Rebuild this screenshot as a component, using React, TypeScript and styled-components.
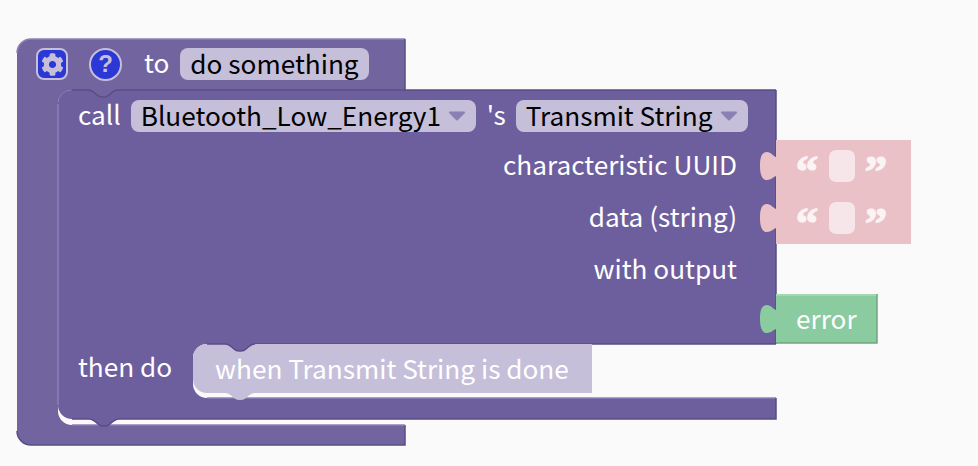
import React from "react";
import styled, {createGlobalStyle} from "styled-components";
import {FaCog} from "react-icons/fa";

const GlobalStyle = createGlobalStyle`
  html, body {
    margin: 0;
    background: #fafafa;
  }
  body {
    font-family: "Noto Sans CJK SC", "Noto Sans", sans-serif;
  }
`;

const Canvas = styled.div`
  position: relative;
  width: 978px;
  height: 466px;
  overflow: hidden;
  background: #fafafa;
`;

const Shapes = styled.svg`
  position: absolute;
  left: 0;
  top: 0;
`;

const Row = styled.div<{ $x: number; $y: number }>`
  position: absolute;
  left: ${p => p.$x}px;
  top: ${p => p.$y}px;
  height: 32px;
  display: flex;
  align-items: center;
`;

const Label = styled.span<{ $before?: number; $after?: number }>`
  color: #fff;
  font-size: 26.2px;
  line-height: 30px;
  padding-bottom: 4px;
  white-space: nowrap;
  margin-left: ${p => p.$before || 0}px;
  margin-right: ${p => p.$after || 0}px;
`;

const Field = styled.div<{ $width: number }>`
  box-sizing: border-box;
  width: ${p => p.$width}px;
  height: 32px;
  padding: 0 10px 3px 10px;
  display: flex;
  align-items: center;
  justify-content: space-between;
  border-radius: 8px;
  background: #c5bfda;
  color: #000;
  font-size: 26.2px;
  line-height: 30px;
  white-space: nowrap;
`;

const Arrow = styled.svg`
  flex: none;
  width: 18px;
  height: 10px;
  margin-top: 3px;
`;

const GearButton = styled.div`
  box-sizing: border-box;
  width: 32px;
  height: 32px;
  margin-right: 21px;
  display: flex;
  align-items: center;
  justify-content: center;
  border: 2px solid #c5bfda;
  border-radius: 8px;
  background: #2b38d6;
  color: #c5bfda;
  font-size: 23px;
`;

const HelpButton = styled.div`
  box-sizing: border-box;
  width: 33px;
  height: 33px;
  margin-right: 22px;
  display: flex;
  align-items: center;
  justify-content: center;
  border: 2px solid #c5bfda;
  border-radius: 50%;
  background: #2b38d6;
  color: #c5bfda;
  font-family: "Liberation Sans", sans-serif;
  font-size: 24px;
  font-weight: 700;
  line-height: 28px;
`;

const SocketLabels = styled.div`
  position: absolute;
  right: 241px;
  top: 138px;
  display: flex;
  flex-direction: column;
  align-items: flex-end;
`;

const SocketLabel = styled.div`
  height: 52px;
  color: #fff;
  font-size: 26.2px;
  line-height: 52px;
  white-space: nowrap;
`;

const Quote = styled.span`
  width: 24px;
  height: 32px;
  color: #fbf3f4;
  font-family: "Liberation Serif", serif;
  font-size: 45px;
  font-weight: 700;
  line-height: 42px;
  text-align: center;
  -webkit-text-stroke: 1.2px #fbf3f4;
`;

const TextInput = styled.div`
  width: 26px;
  height: 32px;
  margin: 0 9px 0 10px;
  border-radius: 7px;
  background: #f6e6ea;
`;

type Edge = { d: string; color: string };

type BlockShape = {
  d: string;
  fill: string;
  edges: Edge[];
};

// the dent on top of a stacking block, left to right
const notch = (x: number, y: number) =>
  `H${x} Q${x + 4} ${y} ${x + 9} ${y + 5} Q${x + 11} ${y + 7} ${x + 14} ${y + 7} H${x + 16} Q${x + 19} ${y + 7} ${x + 21} ${y + 5} Q${x + 26} ${y} ${x + 30} ${y}`;

// the bump under a stacking block, right to left
const tab = (x: number, y: number) =>
  `H${x} Q${x - 4} ${y} ${x - 9} ${y + 5} Q${x - 11} ${y + 7} ${x - 14} ${y + 7} H${x - 16} Q${x - 19} ${y + 7} ${x - 21} ${y + 5} Q${x - 26} ${y} ${x - 30} ${y}`;

const puzzle = (y: number) =>
  `V${y + 36} C773 ${y + 37} 771 ${y + 40} 767 ${y + 40} C761 ${y + 40} 760 ${y + 32} 760 ${y + 26} C760 ${y + 19} 761 ${y + 12} 767 ${y + 12} C771 ${y + 12} 773 ${y + 16} 776 ${y + 17} Z`;

const blocks: BlockShape[] = [
  {
    // procedure definition, wraps the call block
    d: `M17 53 A14 14 0 0 1 31 39 H405 V90 ${tab(118, 90)} H72 A14 14 0 0 0 58 104 V411 A14 14 0 0 0 72 425 H405 V445 H31 A14 14 0 0 1 17 431 Z`,
    fill: "#72649f",
    edges: [
      {d: "M17 53 A14 14 0 0 1 31 39 H405", color: "#8e80b8"},
      {d: "M405 39 V90 M405 425 V445 H31 A14 14 0 0 1 17 431", color: "#594d85"},
      {d: "M72 425 H405", color: "#8e80b8"},
    ],
  },
  {
    // call block with its statement slot
    d: `M58 104 A14 14 0 0 1 72 90 ${notch(88, 90)} H776 V344 ${tab(255, 344)} H207 A14 14 0 0 0 193 358 V384 A14 14 0 0 0 207 398 H776 V419 ${tab(119, 419)} H72 A14 14 0 0 1 58 405 Z`,
    fill: "#6d5e9e",
    edges: [
      {d: `M72 90 ${notch(88, 90)} H776`, color: "#594d85"},
      {d: "M58 104 V405", color: "#8e80b8"},
      {d: "M776 90 V344 M255 344 H776", color: "#594d85"},
      {d: "M207 398 H776", color: "#8e80b8"},
      {d: `M776 398 V419 ${tab(119, 419)} H72`, color: "#594d85"},
    ],
  },
  {
    // event block in the slot
    d: `M193 358 A14 14 0 0 1 207 344 ${notch(225, 344)} H592 V393 ${tab(255, 393)} H207 A14 14 0 0 1 193 379 Z`,
    fill: "#c5bfda",
    edges: [{d: `M207 344 ${notch(225, 344)}`, color: "#594d85"}],
  },
  {
    d: `M776 140 H911 V192 H776 ${puzzle(140)}`,
    fill: "#ebc1c8",
    edges: [],
  },
  {
    d: `M776 192 H911 V244 H776 ${puzzle(192)}`,
    fill: "#ebc1c8",
    edges: [],
  },
  {
    d: `M776 294 H877 V343 H776 ${puzzle(293)}`,
    fill: "#8acb9f",
    edges: [
      {d: "M776 295 H877", color: "#a9dcb9"},
      {d: "M877 294 V343 H776", color: "#6fa582"},
    ],
  },
];

const DropdownArrow = () => (
  <Arrow viewBox="0 0 18 10">
    <path d="M2 1.5 H16 L9 8.5 Z" fill="#8c80b4" stroke="#8c80b4" strokeWidth="2" strokeLinejoin="round"/>
  </Arrow>
);

function App() {
  return (
    <Canvas>
      <GlobalStyle/>
      <Shapes width="978" height="466">
        {blocks.map((b, i) => (
          <g key={i}>
            <path d={b.d} fill={b.fill}/>
            {b.edges.map((e, j) => (
              <path key={j} d={e.d} fill="none" stroke={e.color} strokeWidth="1.5"/>
            ))}
          </g>
        ))}
      </Shapes>

      <Row $x={36} $y={48}>
        <GearButton><FaCog/></GearButton>
        <HelpButton>?</HelpButton>
        <Label $after={11}>to</Label>
        <Field $width={189}>do something</Field>
      </Row>

      <Row $x={78} $y={100}>
        <Label $after={10}>call</Label>
        <Field $width={345}>Bluetooth_Low_Energy1<DropdownArrow/></Field>
        <Label $before={11} $after={10}>'s</Label>
        <Field $width={232}>Transmit String<DropdownArrow/></Field>
      </Row>

      <SocketLabels>
        <SocketLabel>characteristic UUID</SocketLabel>
        <SocketLabel>data (string)</SocketLabel>
        <SocketLabel>with output</SocketLabel>
      </SocketLabels>

      <Row $x={795} $y={150}>
        <Quote>“</Quote><TextInput/><Quote>”</Quote>
      </Row>
      <Row $x={795} $y={202}>
        <Quote>“</Quote><TextInput/><Quote>”</Quote>
      </Row>
      <Row $x={796} $y={304}>
        <Label>error</Label>
      </Row>

      <Row $x={78} $y={352}>
        <Label>then do</Label>
      </Row>
      <Row $x={215} $y={354}>
        <Label>when Transmit String is done</Label>
      </Row>
    </Canvas>
  );
}

export default App;
